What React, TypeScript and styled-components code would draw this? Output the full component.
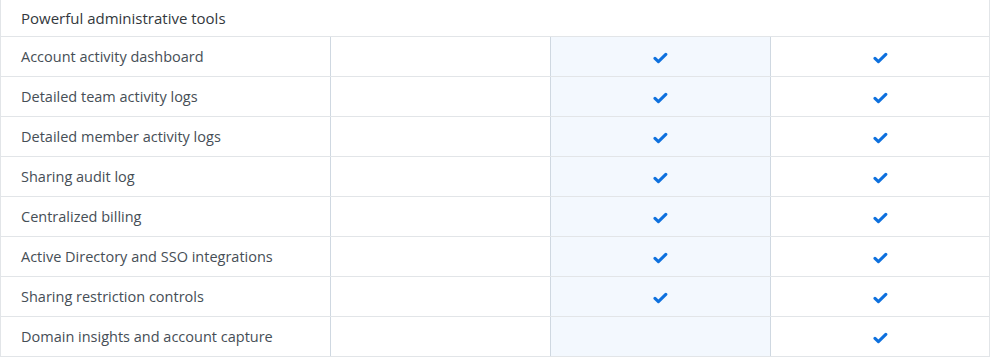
import React from "react";
import styled, { createGlobalStyle } from "styled-components";

const GlobalStyle = createGlobalStyle`
  body {
    margin: 0;
    background: #ffffff;
    font-family: "Open Sans", "Liberation Sans", sans-serif;
  }
`;

const features = [
  { name: "Account activity dashboard", plans: [true, true] },
  { name: "Detailed team activity logs", plans: [true, true] },
  { name: "Detailed member activity logs", plans: [true, true] },
  { name: "Sharing audit log", plans: [true, true] },
  { name: "Centralized billing", plans: [true, true] },
  { name: "Active Directory and SSO integrations", plans: [true, true] },
  { name: "Sharing restriction controls", plans: [true, true] },
  { name: "Domain insights and account capture", plans: [false, true] },
];

const CheckIcon = () => (
  <svg width="15" height="12" viewBox="0 0 15 12" fill="none">
    <path
      d="M2 6.4 L5.4 9.6 L12.8 2.4"
      stroke="#0d70de"
      strokeWidth="3.1"
      strokeLinecap="round"
      strokeLinejoin="round"
    />
  </svg>
);

const Table = styled.div`
  width: 990px;
  box-sizing: border-box;
  border-left: 1px solid #e2e5e8;
  border-right: 1px solid #e2e5e8;
`;

const SectionHeader = styled.div`
  height: 36px;
  display: flex;
  align-items: center;
  padding-left: 20px;
  border-bottom: 1px solid #e2e5e8;
  font-size: 15px;
  color: #33383d;
  font-weight: 400;
`;

const Row = styled.div`
  display: grid;
  grid-template-columns: 330px 220px 220px 1fr;
  height: 40px;
  box-sizing: border-box;
  border-bottom: 1px solid #e2e5e8;
`;

const Cell = styled.div<{ $highlight?: boolean; $last?: boolean }>`
  display: flex;
  align-items: center;
  justify-content: center;
  padding-top: 2px;
  border-right: ${(p) => (p.$last ? "none" : "1px solid #cfd8e1")};
  background: ${(p) => (p.$highlight ? "#f3f8fe" : "transparent")};
`;

const NameCell = styled(Cell)`
  justify-content: flex-start;
  padding-top: 0;
  padding-left: 20px;
  font-size: 14.5px;
  color: #464e56;
`;

export default function App() {
  return (
    <>
      <GlobalStyle />
      <Table>
        <SectionHeader>Powerful administrative tools</SectionHeader>
        {features.map((f) => (
          <Row key={f.name}>
            <NameCell>{f.name}</NameCell>
            <Cell />
            <Cell $highlight>{f.plans[0] && <CheckIcon />}</Cell>
            <Cell $last>{f.plans[1] && <CheckIcon />}</Cell>
          </Row>
        ))}
      </Table>
    </>
  );
}
